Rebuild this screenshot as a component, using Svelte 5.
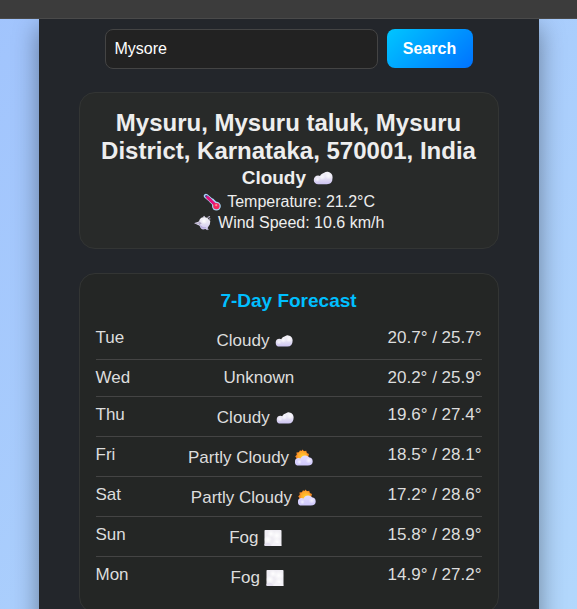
<script>
  let query = $state('Mysore');

  const days = [
    { day: 'Tue', text: 'Cloudy', icon: 'cloud', temp: '20.7° / 25.7°' },
    { day: 'Wed', text: 'Unknown', icon: '', temp: '20.2° / 25.9°' },
    { day: 'Thu', text: 'Cloudy', icon: 'cloud', temp: '19.6° / 27.4°' },
    { day: 'Fri', text: 'Partly Cloudy', icon: 'partly', temp: '18.5° / 28.1°' },
    { day: 'Sat', text: 'Partly Cloudy', icon: 'partly', temp: '17.2° / 28.6°' },
    { day: 'Sun', text: 'Fog', icon: 'fog', temp: '15.8° / 28.9°' },
    { day: 'Mon', text: 'Fog', icon: 'fog', temp: '14.9° / 27.2°' }
  ];
</script>

<svg class="defs" aria-hidden="true">
  <defs>
    <linearGradient id="puff" x1="0" y1="0" x2="0" y2="1">
      <stop offset="0" stop-color="#f4f2f8" />
      <stop offset="0.5" stop-color="#e6e2f3" />
      <stop offset="1" stop-color="#cbc2f0" />
    </linearGradient>
    <linearGradient id="lilac" x1="0" y1="0" x2="0" y2="1">
      <stop offset="0" stop-color="#e2dcff" />
      <stop offset="1" stop-color="#cfc8fb" />
    </linearGradient>
    <radialGradient id="shine">
      <stop offset="0" stop-color="#fff" />
      <stop offset="1" stop-color="#fff" stop-opacity="0" />
    </radialGradient>
    <radialGradient id="sun" cx="0.55" cy="0.6">
      <stop offset="0" stop-color="#ffd42e" />
      <stop offset="1" stop-color="#ffa62b" />
    </radialGradient>
  </defs>
</svg>

{#snippet glyph(name)}
  <svg class="glyph" viewBox="0 0 18 18" aria-hidden="true">
    {#if name === 'cloud'}
      <path d="M4.6 14.6A3.9 3.9 0 0 1 4.6 6.8Q5.6 6.8 6.3 7.2A5.2 5.2 0 0 1 10 4.2Q11.6 3.2 13.4 3.4A5 5 0 0 1 17.6 8.8Q17.6 14.6 12.4 14.6Z" fill="url(#puff)" />
      <circle cx="8.3" cy="8" r="3" fill="url(#shine)" opacity="0.7" />
      <circle cx="14" cy="7" r="3.3" fill="url(#shine)" opacity="0.8" />
      <circle cx="4" cy="10.2" r="2.4" fill="url(#shine)" opacity="0.7" />
    {:else if name === 'partly'}
      <path d="M7.5.5 9 2.2 11.2 1.8 11.9 4 14 5 13.3 7.2 14 9.5 10 12 4 13 .8 11 1.7 9.2.2 7.4 1.8 5.8 1.4 3.6 3.9 3.3 5 1.3 6.4 2Z" fill="#f98c25" />
      <circle cx="7.4" cy="7" r="4.9" fill="url(#sun)" />
      <path d="M3.6 16.5A3.7 3.7 0 0 1 3.6 9.1Q4.7 9 5.5 9.5A5.1 5.1 0 0 1 10.3 6.5Q12.6 6.5 14 8.3A4.2 4.2 0 0 1 17.7 12.4Q17.7 16.5 12.8 16.5Z" fill="url(#lilac)" />
      <circle cx="13.8" cy="11.6" r="3.2" fill="url(#shine)" opacity="0.7" />
      <circle cx="4.4" cy="13" r="2.4" fill="url(#shine)" opacity="0.7" />
    {:else if name === 'fog'}
      <rect x="0.5" y="1" width="17" height="16" rx="0.8" fill="#efedf3" />
      <circle cx="7" cy="4.8" r="3.8" fill="url(#shine)" />
      <circle cx="12.8" cy="6.5" r="5" fill="url(#shine)" />
      <circle cx="4" cy="10.5" r="4" fill="url(#shine)" />
      <circle cx="13" cy="13" r="4.2" fill="url(#shine)" />
      <path d="M.5 15Q3.5 12.5 6.5 15Q7 16 7 17H1.3Q.5 17 .5 16Z" fill="#e6e2f0" />
      <path d="M7.5 17Q8 13.7 11.5 13.4Q15 13.3 17.5 16V16.2Q17.5 17 16.7 17Z" fill="#f5f3f9" />
    {:else if name === 'thermometer'}
      <path d="M3 3 9 8.2" stroke="#a9d5f5" stroke-width="4.4" stroke-linecap="round" />
      <path d="M8 7 12 11" stroke="#a9d5f5" stroke-width="5.2" />
      <circle cx="13.4" cy="13.1" r="4.4" fill="#a9d5f5" />
      <path d="M3.2 3.2 8 7.5" stroke="#5a3a8c" stroke-width="2.4" stroke-linecap="round" />
      <path d="M4.6 4.5 12.5 12" stroke="#e3107b" stroke-width="3" stroke-linecap="round" />
      <circle cx="13.4" cy="13.1" r="3.2" fill="#f5275f" />
      <circle cx="13.2" cy="12.2" r="1.1" fill="#ff8a98" />
    {:else if name === 'wind'}
      <path d="M.3 9.2 5 7.4Q5.7 3.4 9.5 3.2L10.5 2.2 11.6 3.4Q13.8 3.2 14.5 5.2L16.3 7 15.8 10.5 14 13.2 13 16 11.4 15Q7 16.8 5.6 11.8Z" fill="url(#puff)" />
      <circle cx="10" cy="7" r="3.2" fill="url(#shine)" />
      <path d="M6.3 11.6Q8.5 14.8 11.8 13.5" stroke="#b5a9da" stroke-width="1.2" fill="none" />
      <path d="M.8 9.2H6M4.6 7.8 6.8 9.2 4.9 10.8" stroke="#afa7c5" stroke-width="1.1" fill="none" />
      <path d="M10.4 3.4 9.7 1.9M13.5 3.6 16 2.6M14.8 5.3 16.4 4.7M13.2 14.4 14.2 15.9" stroke="#c9c0dd" stroke-width="1.1" fill="none" />
    {/if}
  </svg>
{/snippet}

<div class="page">
  <div class="topbar"></div>
  <main>
    <form onsubmit={(e) => e.preventDefault()}>
      <input type="text" aria-label="City" bind:value={query} />
      <button type="submit">Search</button>
    </form>

    <section class="card current">
      <h1>Mysuru, Mysuru taluk, Mysuru District, Karnataka, 570001, India</h1>
      <p class="condition">Cloudy {@render glyph('cloud')}</p>
      <p>{@render glyph('thermometer')} Temperature: 21.2°C</p>
      <p>{@render glyph('wind')} Wind Speed: 10.6 km/h</p>
    </section>

    <section class="card forecast">
      <h2>7-Day Forecast</h2>
      <ul>
        {#each days as d}
          <li>
            <span>{d.day}</span>
            <span class:tall={d.icon}>{d.text}{#if d.icon}{' '}{@render glyph(d.icon)}{/if}</span>
            <span>{d.temp}</span>
          </li>
        {/each}
      </ul>
    </section>
  </main>
</div>

<style>
  :global(body) {
    margin: 0;
    background: #a1c4fd;
  }
  :global(html) {
    scrollbar-width: none;
  }
  .defs {
    position: absolute;
    width: 0;
    height: 0;
  }
  .page {
    min-height: 100vh;
    background: linear-gradient(135deg, #a1c4fd, #b3d8fc);
    font-family: 'Liberation Sans', Arial, sans-serif;
    color: #eee;
    overflow: hidden;
  }
  .topbar {
    position: relative;
    box-sizing: border-box;
    height: 19px;
    background: #3c3c3c;
    border-bottom: 1px solid #4a4a4a;
  }
  main {
    box-sizing: border-box;
    max-width: 500px;
    margin: 0 auto;
    padding: 10px 40px 40px;
    background: #23262b;
    box-shadow: 0 8px 24px rgba(0, 0, 0, 0.4);
  }
  form {
    display: flex;
    justify-content: center;
    align-items: flex-start;
    gap: 9px;
    margin-bottom: 23px;
  }
  input {
    box-sizing: border-box;
    width: 65%;
    height: 40px;
    padding: 0 9px;
    border: 1px solid #444;
    border-radius: 8px;
    background: #222;
    color: #fff;
    font: 16px 'Liberation Sans', Arial, sans-serif;
  }
  button {
    min-width: 86px;
    height: 39px;
    padding: 0 16px;
    border: 0;
    border-radius: 8px;
    background: linear-gradient(135deg, #00c6ff, #0072ff);
    color: #fff;
    font: bold 16px 'Liberation Sans', Arial, sans-serif;
  }
  .card {
    padding: 16px;
    border: 1px solid #333534;
    border-radius: 16px;
    background: #282a29;
  }
  .current {
    margin-bottom: 24px;
    padding-bottom: 15px;
    text-align: center;
  }
  h1,
  h2,
  p,
  ul {
    margin: 0;
    padding: 0;
  }
  h1 {
    font-size: 24px;
    line-height: 28px;
  }
  p {
    font-size: 16px;
    line-height: 21px;
  }
  .condition {
    font-size: 19px;
    line-height: 26px;
    font-weight: bold;
  }
  .forecast {
    background: #242625;
    color: #ddd;
  }
  h2 {
    padding-bottom: 8px;
    color: #00bfff;
    font-size: 19px;
    line-height: 22px;
    text-align: center;
  }
  ul {
    list-style: none;
  }
  li {
    display: flex;
    justify-content: space-between;
    padding: 9px 0;
    border-bottom: 1px solid #444;
    font-size: 17px;
    line-height: 18px;
  }
  li:last-child {
    border-bottom: 0;
  }
  .tall {
    padding-top: 2px;
    line-height: 19px;
  }
  .glyph {
    width: 18px;
    height: 18px;
    margin: 0 2px 0 1px;
    vertical-align: -4px;
    fill: none;
  }
  .condition .glyph {
    width: 20px;
    height: 20px;
    margin: 0 2px;
  }
</style>
